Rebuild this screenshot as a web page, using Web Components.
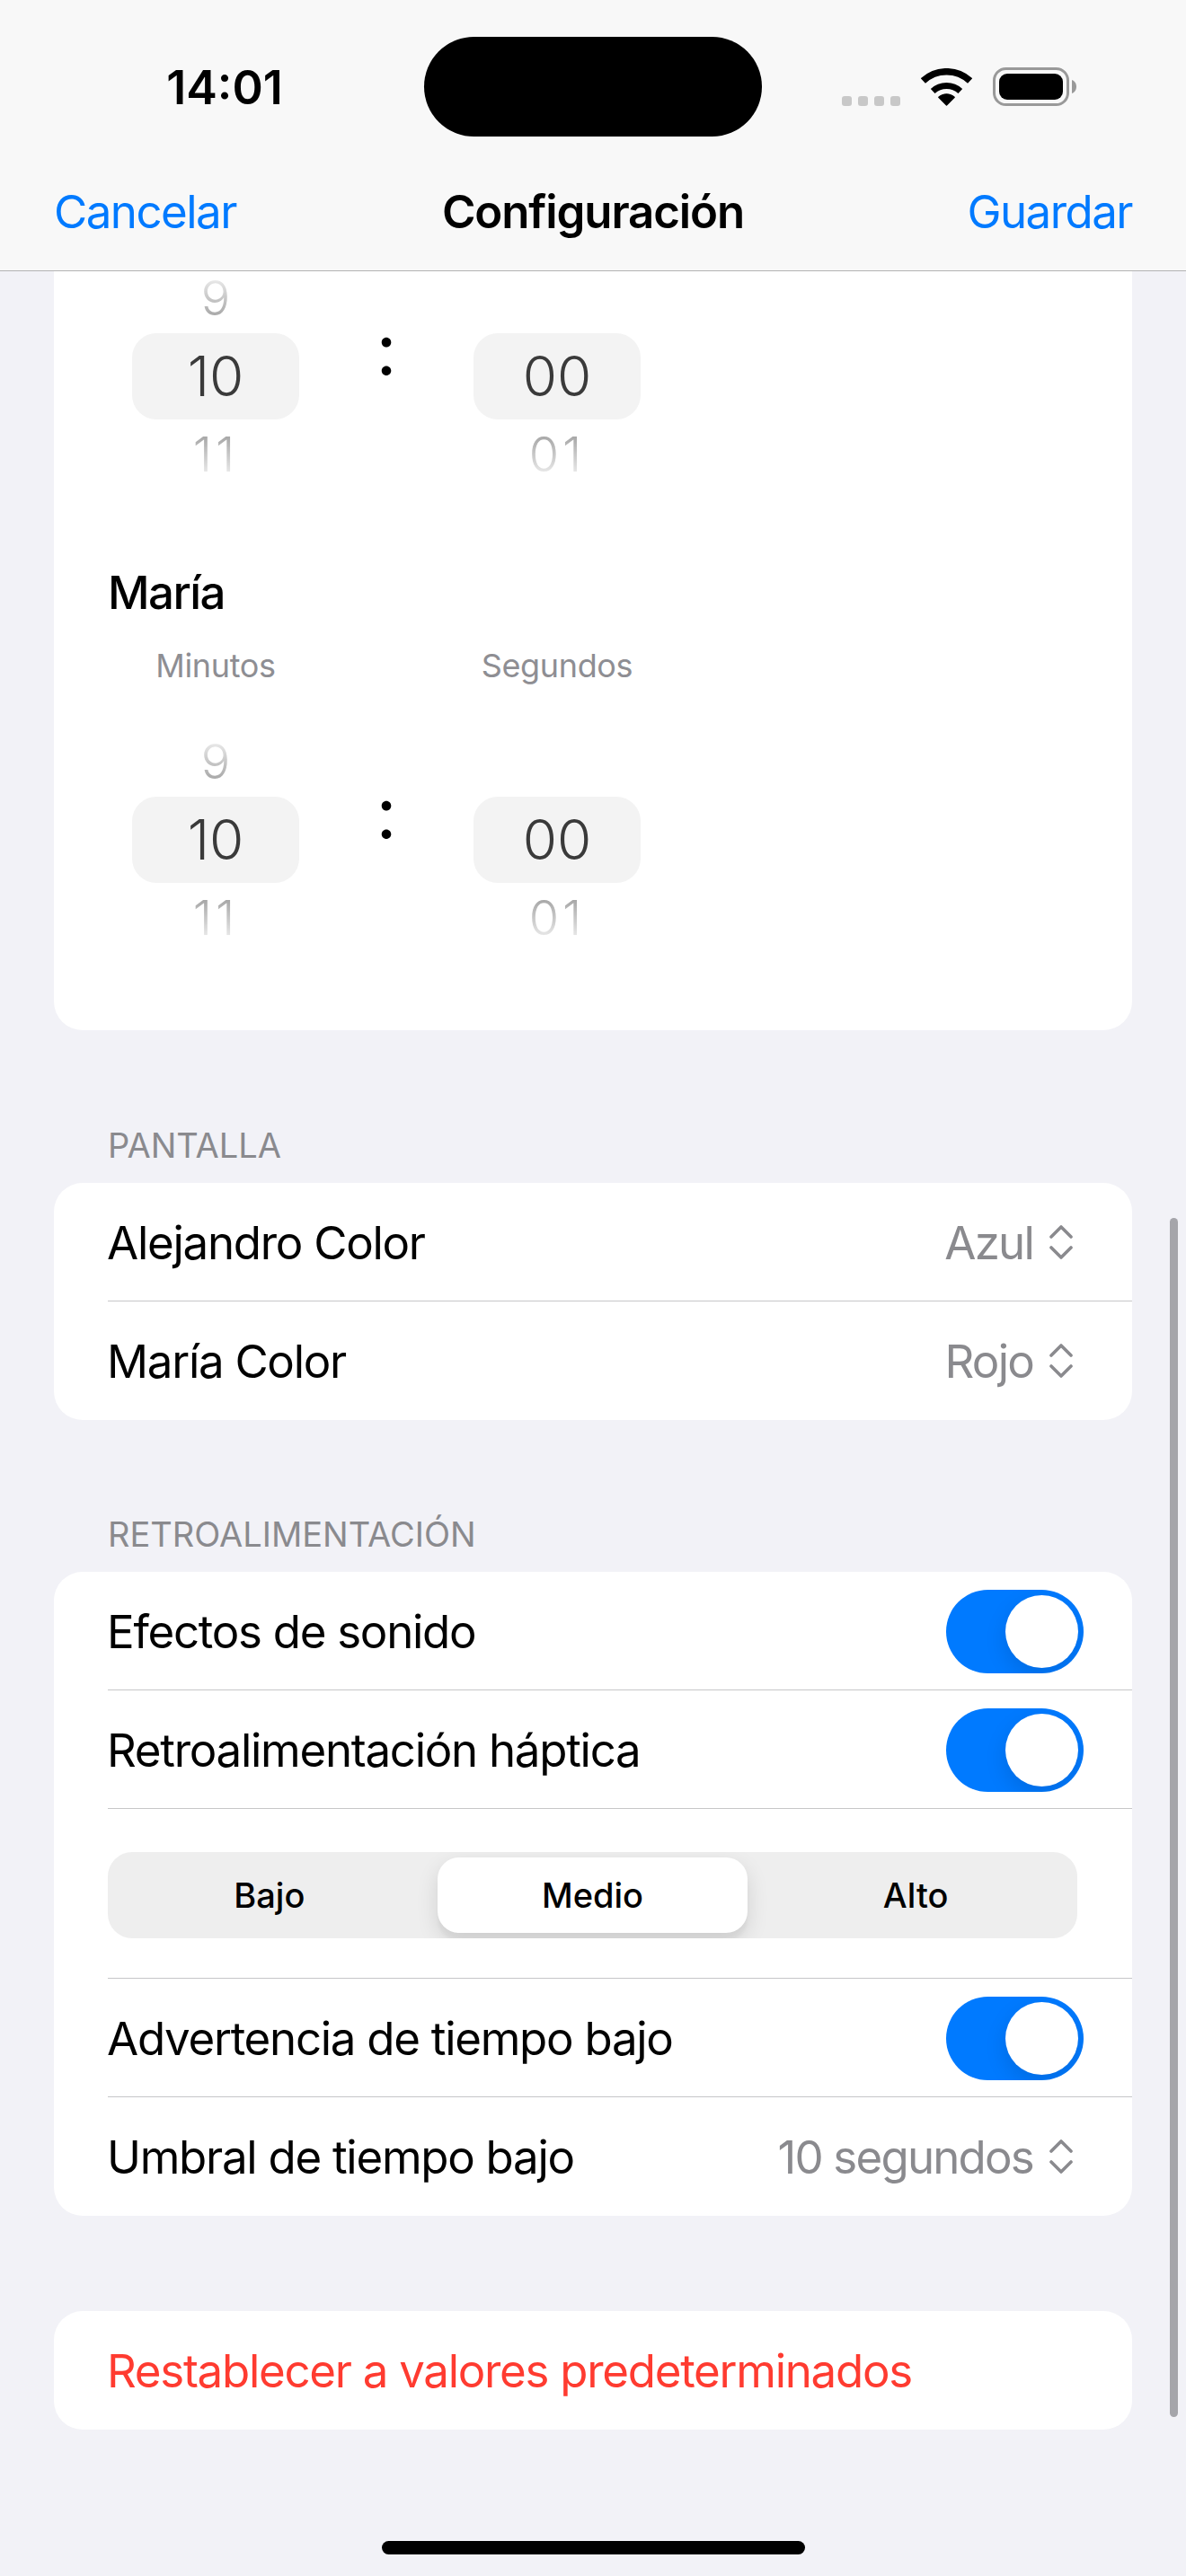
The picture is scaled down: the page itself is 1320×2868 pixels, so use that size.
<!DOCTYPE html>
<html lang="es">
<head>
<meta charset="utf-8">
<title>Configuración</title>
<style>
    html, body { margin: 0; padding: 0; background: #f2f2f7; }
    body { font-family: Inter, "Liberation Sans", sans-serif; }
</style>
</head>
<body>
<settings-screen>
    <nav-header slot="header" title="Configuración" cancel="Cancelar" save="Guardar"></nav-header>

    <settings-card flat>
        <time-picker>
            <wheel-column slot="min" prev="9" value="10" next="11"></wheel-column>
            <wheel-column slot="sec" prev="" value="00" next="01"></wheel-column>
        </time-picker>
        <player-name>María</player-name>
        <time-picker first-label="Minutos" second-label="Segundos">
            <wheel-column slot="min" prev="9" value="10" next="11"></wheel-column>
            <wheel-column slot="sec" prev="" value="00" next="01"></wheel-column>
        </time-picker>
    </settings-card>

    <settings-section label="PANTALLA" style="--top: 104px">
        <settings-row label="Alejandro Color"><select-value>Azul</select-value></settings-row>
        <settings-row label="María Color" last><select-value>Rojo</select-value></settings-row>
    </settings-section>

    <settings-section label="RETROALIMENTACIÓN" style="--top: 103px">
        <settings-row label="Efectos de sonido"><ios-toggle></ios-toggle></settings-row>
        <settings-row label="Retroalimentación háptica"><ios-toggle></ios-toggle></settings-row>
        <settings-row wide><segmented-control options="Bajo,Medio,Alto" selected="1"></segmented-control></settings-row>
        <settings-row label="Advertencia de tiempo bajo"><ios-toggle></ios-toggle></settings-row>
        <settings-row label="Umbral de tiempo bajo" last><select-value>10 segundos</select-value></settings-row>
    </settings-section>

    <settings-section style="--top: 106px">
        <settings-row label="Restablecer a valores predeterminados" last danger></settings-row>
    </settings-section>
</settings-screen>

<script>
    const TRACK = "-0.025em";

    class SettingsScreen extends HTMLElement {
        constructor() {
            super();
            this.attachShadow({ mode: "open" });
            this.shadowRoot.innerHTML = String.raw`<style>
                :host {
                    display : block;
                    position : relative;
                    width : 1320px;
                    height : 2868px;
                    overflow : hidden;
                    background : #f2f2f7;
                    color : #000;
                    font-family : Inter, "Liberation Sans", sans-serif;
                }
                #content {
                    padding : 0 60px;
                }
                /* overlay scroll indicator */
                #scroll {
                    position : absolute;
                    left : 1302px;
                    top : 1356px;
                    width : 9px;
                    height : 1335px;
                    border-radius : 5px;
                    background : #a5a5aa;
                }
                #home {
                    position : absolute;
                    left : 425px;
                    top : 2829px;
                    width : 471px;
                    height : 15px;
                    border-radius : 8px;
                    background : #000;
                }
            </style>
            <slot name="header"></slot>
            <div id="content"><slot></slot></div>
            <div id="scroll"></div>
            <div id="home"></div>`;
        }
    }

    class NavHeader extends HTMLElement {
        constructor() {
            super();
            this.attachShadow({ mode: "open" });
            this.shadowRoot.innerHTML = String.raw`<style>
                :host {
                    display : block;
                    background : #f8f8f8;
                    border-bottom : 1px solid #b3b3b3;
                }
                #status {
                    display : grid;
                    grid-template-columns : 472px 376px 1fr;
                    padding : 41px 0 18px;
                }
                #time {
                    padding-left : 28px;
                    text-align : center;
                    font-size : 52px;
                    font-weight : 600;
                    line-height : 60px;
                    margin-top : 27px;
                }
                #island {
                    height : 111px;
                    border-radius : 56px;
                    background : #000;
                }
                #icons {
                    display : flex;
                    align-items : flex-end;
                    align-self : start;
                    margin-top : 34px;
                    padding-left : 89px;
                }
                #signal {
                    display : flex;
                    gap : 7px;
                    margin-right : 23px;
                }
                #signal i {
                    width : 11px;
                    height : 11px;
                    border-radius : 3px;
                    background : #c8c8c8;
                }
                #wifi {
                    display : block;
                    width : 57px;
                    height : 42px;
                    margin-right : 23px;
                }
                #battery {
                    display : block;
                    width : 93px;
                    height : 43px;
                }
                #nav {
                    display : grid;
                    grid-template-columns : 1fr auto 1fr;
                    align-items : center;
                    height : 131px;
                    padding : 0 60px;
                    font-size : 51px;
                    letter-spacing : -0.03em;
                }
                #title {
                    font-weight : 600;
                    letter-spacing : -0.022em;
                }
                .action { color : #007aff; }
                #save { text-align : right; }
            </style>
            <div id="status">
                <div id="time">14:01</div>
                <div id="island"></div>
                <div id="icons">
                    <div id="signal"><i></i><i></i><i></i><i></i></div>
                    <svg id="wifi" viewBox="0 0 57 42" fill="none" stroke="#000">
                        <path d="M2.4 14 A38.25 38.25 0 0 1 54.6 14" stroke-width="7.5"/>
                        <path d="M13.2 25.5 A22.5 22.5 0 0 1 43.8 25.5" stroke-width="7"/>
                        <path d="M28.5 41 L19.8 32.2 A13 13 0 0 1 37.2 32.2 Z" fill="#000" stroke-width="1.4" stroke-linejoin="round"/>
                    </svg>
                    <svg id="battery" viewBox="0 0 93 43">
                        <rect x="1.5" y="1.5" width="82" height="40" rx="13" fill="none" stroke="#999" stroke-width="3"/>
                        <rect x="7" y="7" width="71" height="29" rx="9" fill="#000"/>
                        <path d="M88 14 C91 15 93 18 93 21.5 C93 25 91 28 88 29 Z" fill="#999"/>
                    </svg>
                </div>
            </div>
            <div id="nav">
                <span class="action" id="cancel"></span>
                <span id="title"></span>
                <span class="action" id="save"></span>
            </div>`;
            this.shadowRoot.querySelector("#cancel").textContent = this.getAttribute("cancel");
            this.shadowRoot.querySelector("#title").textContent = this.getAttribute("title");
            this.shadowRoot.querySelector("#save").textContent = this.getAttribute("save");
        }
    }

    class SettingsCard extends HTMLElement {
        constructor() {
            super();
            this.attachShadow({ mode: "open" });
            this.shadowRoot.innerHTML = String.raw`<style>
                :host {
                    display : block;
                    background : #fff;
                    border-radius : 32px;
                }
                :host([flat]) {
                    border-radius : 0 0 32px 32px;
                    padding-bottom : 95px;
                }
            </style><slot></slot>`;
        }
    }

    class SettingsSection extends HTMLElement {
        constructor() {
            super();
            this.attachShadow({ mode: "open" });
            const label = this.getAttribute("label");
            this.shadowRoot.innerHTML = String.raw`<style>
                :host {
                    display : block;
                    margin-top : var(--top, 100px);
                }
                #label {
                    height : 48px;
                    line-height : 48px;
                    margin-bottom : 18px;
                    padding-left : 60px;
                    font-size : 38px;
                    color : #8a8a8e;
                }
                #rows {
                    background : #fff;
                    border-radius : 32px;
                    overflow : hidden;
                }
            </style>
            ${label ? `<div id="label">${label}</div>` : ""}
            <div id="rows"><slot></slot></div>`;
        }
    }

    class SettingsRow extends HTMLElement {
        constructor() {
            super();
            this.attachShadow({ mode: "open" });
            const label = this.getAttribute("label") || "";
            this.shadowRoot.innerHTML = String.raw`<style>
                :host {
                    display : block;
                    padding-left : 60px;
                    font-size : 51px;
                    letter-spacing : ${TRACK};
                }
                #inner {
                    display : flex;
                    align-items : center;
                    justify-content : space-between;
                    height : 132px;
                    padding-right : 54px;
                    background : linear-gradient(#c6c6c8, #c6c6c8) bottom / 100% 1px no-repeat;
                }
                :host([last]) #inner { background : none; }
                :host([danger]) { color : #ff3b30; }
                :host([wide]) #inner {
                    height : 189px;
                    padding : 48px 61px 45px 0;
                    box-sizing : border-box;
                }
                #label { margin-left : -1px; }
                #label:empty { display : none; }
            </style>
            <div id="inner">
                <span id="label">${label}</span>
                <slot></slot>
            </div>`;
        }
    }

    class SelectValue extends HTMLElement {
        constructor() {
            super();
            this.attachShadow({ mode: "open" });
            this.shadowRoot.innerHTML = String.raw`<style>
                :host {
                    display : flex;
                    align-items : center;
                    gap : 18px;
                    margin-right : 12px;
                    color : #8a8a8e;
                    letter-spacing : -0.035em;
                }
                svg { display : block; width : 26px; height : 38px; }
            </style>
            <slot></slot>
            <svg viewBox="0 0 26 38" fill="none" stroke="#8a8a8e" stroke-width="3.6" stroke-linecap="round" stroke-linejoin="round">
                <path d="M2 13 L13 2 L24 13"/>
                <path d="M2 25 L13 36 L24 25"/>
            </svg>`;
        }
    }

    class IosToggle extends HTMLElement {
        constructor() {
            super();
            this.attachShadow({ mode: "open" });
            this.shadowRoot.innerHTML = String.raw`<style>
                :host {
                    display : flex;
                    justify-content : flex-end;
                    align-items : center;
                    box-sizing : border-box;
                    width : 153px;
                    height : 93px;
                    padding : 6px;
                    border-radius : 47px;
                    background : #007aff;
                    overflow : hidden;
                }
                #knob {
                    width : 81px;
                    height : 81px;
                    border-radius : 50%;
                    background : #fff;
                    box-shadow : 0 9px 24px rgba(0, 0, 0, 0.12);
                }
            </style><div id="knob"></div>`;
        }
    }

    class SegmentedControl extends HTMLElement {
        constructor() {
            super();
            this.attachShadow({ mode: "open" });
            const selected = Number(this.getAttribute("selected"));
            const items = this.getAttribute("options").split(",")
                .map((o, i) => `<div class="seg ${i === selected ? "on" : ""}">${o}</div>`).join("");
            this.shadowRoot.innerHTML = String.raw`<style>
                :host {
                    display : grid;
                    grid-template-columns : repeat(3, 1fr);
                    box-sizing : border-box;
                    width : 100%;
                    height : 96px;
                    padding : 6px 0;
                    border-radius : 27px;
                    background : #eeeeee;
                    overflow : hidden;
                    font-size : 38px;
                    font-weight : 500;
                    letter-spacing : 0;
                }
                .seg {
                    display : flex;
                    align-items : center;
                    justify-content : center;
                }
                .on {
                    margin : 0 7px;
                    border-radius : 24px;
                    background : #fff;
                    box-shadow : 0 9px 24px rgba(0, 0, 0, 0.12), 0 9px 3px rgba(0, 0, 0, 0.03);
                }
            </style>${items}`;
        }
    }

    class WheelColumn extends HTMLElement {
        constructor() {
            super();
            this.attachShadow({ mode: "open" });
            this.shadowRoot.innerHTML = String.raw`<style>
                :host {
                    display : flex;
                    flex-direction : column;
                    gap : 9px;
                    width : 186px;
                    text-align : center;
                }
                .side {
                    height : 60px;
                    line-height : 60px;
                    font-size : 54px;
                    font-weight : 350;
                    color : #a6a6a6;
                }
                #prev { -webkit-mask-image : linear-gradient(to bottom, transparent 10%, rgba(0,0,0,0.3) 20%, #000 85%); }
                #next {
                    letter-spacing : 4px;
                    -webkit-mask-image : linear-gradient(to top, transparent 10%, rgba(0,0,0,0.3) 20%, #000 85%);
                }
                #value {
                    height : 96px;
                    line-height : 96px;
                    border-radius : 27px;
                    background : #f3f3f3;
                    font-size : 62px;
                    font-weight : 350;
                    color : #3a3a3a;
                }
            </style>
            <div class="side" id="prev">${this.getAttribute("prev")}</div>
            <div id="value">${this.getAttribute("value")}</div>
            <div class="side" id="next">${this.getAttribute("next")}</div>`;
        }
    }

    class TimePicker extends HTMLElement {
        constructor() {
            super();
            this.attachShadow({ mode: "open" });
            const first = this.getAttribute("first-label");
            const second = this.getAttribute("second-label");
            this.shadowRoot.innerHTML = String.raw`<style>
                :host {
                    display : grid;
                    grid-template-columns : 186px 194px 186px;
                    padding-left : 87px;
                }
                .label {
                    height : 44px;
                    line-height : 44px;
                    margin-bottom : 55px;
                    font-size : 36px;
                    color : #8e8e93;
                    text-align : center;
                    letter-spacing : -0.01em;
                }
                #colon {
                    text-align : center;
                    font-size : 80px;
                    font-weight : 400;
                    line-height : 72px;
                    margin-top : 50px;
                }
            </style>
            ${first ? `<div class="label">${first}</div><div></div><div class="label">${second}</div>` : ""}
            <slot name="min"></slot>
            <div id="colon">:</div>
            <slot name="sec"></slot>`;
        }
    }

    class PlayerName extends HTMLElement {
        constructor() {
            super();
            this.attachShadow({ mode: "open" });
            this.shadowRoot.innerHTML = String.raw`<style>
                :host {
                    display : block;
                    margin : 94px 0 29px;
                    padding-left : 60px;
                    height : 60px;
                    line-height : 60px;
                    font-size : 51px;
                    font-weight : 550;
                    letter-spacing : -0.03em;
                }
            </style><slot></slot>`;
        }
    }

    customElements.define("settings-screen", SettingsScreen);
    customElements.define("nav-header", NavHeader);
    customElements.define("settings-card", SettingsCard);
    customElements.define("settings-section", SettingsSection);
    customElements.define("settings-row", SettingsRow);
    customElements.define("select-value", SelectValue);
    customElements.define("ios-toggle", IosToggle);
    customElements.define("segmented-control", SegmentedControl);
    customElements.define("wheel-column", WheelColumn);
    customElements.define("time-picker", TimePicker);
    customElements.define("player-name", PlayerName);
</script>
</body>
</html>
